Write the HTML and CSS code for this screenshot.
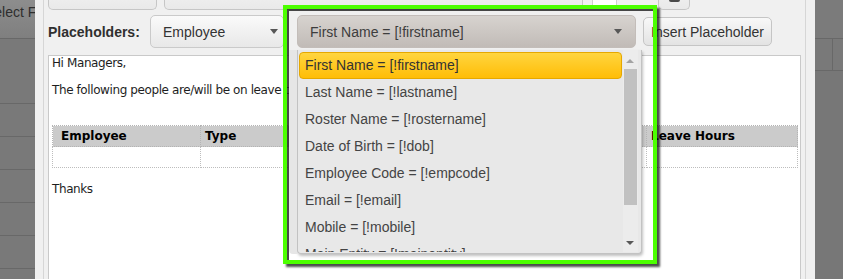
FILE: index.html
```html
<!DOCTYPE html>
<html>
<head>
<meta charset="utf-8">
<link rel="stylesheet" href="styles.css">
</head>
<body>
<div class="screen">
  <aside class="backdrop backdrop-left">
    <div class="bd-cell bd-top"><span class="bd-text">Select F</span></div>
    <div class="bd-cell bd-tall"></div>
    <div class="bd-cell"></div>
    <div class="bd-cell"></div>
    <div class="bd-cell"></div>
    <div class="bd-cell"></div>
    <div class="bd-cell"></div>
    <div class="bd-cell"></div>
  </aside>

  <main class="modal">
    <div class="panel">
      <div class="toolbar">
        <span class="tb-btn tb-1"></span>
        <span class="tb-btn tb-2"></span>
        <span class="tb-box"></span>
        <span class="tb-btn tb-icon"><span class="tb-glyph"></span></span>
      </div>

      <div class="ph-row">
        <label class="ph-label">Placeholders:</label>
        <div class="select sel-type"><span>Employee</span><span class="caret"></span></div>
        <div class="select-wrap">
          <div class="select sel-field"><span>First Name = [!firstname]</span><span class="caret"></span></div>
          <div class="dropdown">
            <ul class="options">
              <li class="active">First Name = [!firstname]</li>
              <li>Last Name = [!lastname]</li>
              <li>Roster Name = [!rostername]</li>
              <li>Date of Birth = [!dob]</li>
              <li>Employee Code = [!empcode]</li>
              <li>Email = [!email]</li>
              <li>Mobile = [!mobile]</li>
              <li>Main Entity = [!mainentity]</li>
            </ul>
            <div class="scrollbar">
              <span class="sb-up"></span>
              <span class="sb-thumb"></span>
              <span class="sb-down"></span>
            </div>
          </div>
        </div>
        <button class="btn">Insert Placeholder</button>
      </div>

      <div class="editor">
        <p>Hi Managers,</p>
        <p>The following people are/will be on leave today:</p>
        <table class="leave-table">
          <colgroup>
            <col class="c1"><col class="c2"><col class="c3"><col class="c4"><col class="c5">
          </colgroup>
          <thead>
            <tr><th class="first">Employee</th><th>Type</th><th>Start Date</th><th>End Date</th><th>Leave Hours</th></tr>
          </thead>
          <tbody>
            <tr><td></td><td></td><td></td><td></td><td></td></tr>
          </tbody>
        </table>
        <p>Thanks</p>
      </div>
    </div>
  </main>

  <aside class="backdrop backdrop-right">
    <div class="bd-cell bd-top-r"></div>
    <div class="bd-cell bd-split"><span class="bd-half"></span><span class="bd-half"></span></div>
    <div class="bd-cell bd-rest"></div>
  </aside>
</div>
<div class="highlight"></div>
</body>
</html>
```

FILE: styles.css
```css
* { box-sizing: border-box; }

html, body {
  margin: 0;
  padding: 0;
  width: 843px;
  height: 279px;
  overflow: hidden;
  background: #7a7a7a;
  font-family: "Liberation Sans", Arial, sans-serif;
}

.screen {
  display: flex;
  width: 843px;
  height: 279px;
  overflow: hidden;
}

/* ---------- dimmed backdrop ---------- */
.backdrop {
  display: flex;
  flex-direction: column;
  background: #797979;
  overflow: hidden;
}
.backdrop-left { width: 35px; flex: none; }
.backdrop-right { width: 28px; flex: none; }

.bd-cell {
  height: 33px;
  flex: none;
  border-bottom: 1px solid #686868;
}
.bd-top {
  height: 39px;
  background: linear-gradient(#8d8d8d, #7f7f7f);
  padding-top: 3px;
  white-space: nowrap;
  overflow: hidden;
}
.bd-text {
  display: inline-block;
  margin-left: -15px;
  font-size: 14px;
  line-height: 16px;
  color: #2e2e2e;
}
.bd-tall { height: 65px; }

.bd-top-r { height: 39px; background: #7b7b7b; }
.bd-split { height: 32px; display: flex; }
.bd-half { width: 18px; border-right: 1px solid #686868; }
.bd-half + .bd-half { border-right: none; flex: 1; }
.bd-rest { border-bottom: none; flex: 1; background: #777; }

/* ---------- modal ---------- */
.modal {
  width: 780px;
  flex: none;
  background: #f0f0f0;
  padding: 0 9px 0 8px;
}

.panel {
  margin-top: -25px;
  border: 1px solid #d6d6d6;
  padding: 0 4px;
  height: 330px;
}

.toolbar {
  display: flex;
  align-items: flex-end;
  height: 34px;
}
.tb-btn {
  height: 30px;
  border: 1px solid #c6c6c6;
  border-top: none;
  border-radius: 0 0 5px 5px;
  background: linear-gradient(#f6f6f6, #e9e9e9);
  flex: none;
}
.tb-1 { width: 109px; }
.tb-2 { width: 419px; margin-left: 7px; }
.tb-box {
  width: 25px;
  height: 30px;
  margin-left: 9px;
  margin-bottom: 2px;
  background: #fff;
  border-left: 1px solid #cfcfcf;
  border-right: 1px solid #cfcfcf;
  flex: none;
}
.tb-icon {
  width: 32px;
  margin-left: 41px;
  display: flex;
  justify-content: center;
}
.tb-glyph {
  width: 11px;
  height: 22px;
  border-radius: 0 0 2px 2px;
  background: #4a4a4a;
}

/* ---------- placeholder row ---------- */
.ph-row {
  display: flex;
  align-items: center;
  height: 33px;
  margin-top: 5px;
}
.ph-label {
  width: 102px;
  flex: none;
  font-weight: bold;
  font-size: 14px;
  color: #2f2f2f;
}

.select {
  display: flex;
  align-items: center;
  justify-content: space-between;
  height: 33px;
  border: 1px solid #cacaca;
  border-radius: 5px;
  font-size: 14px;
  color: #333;
  white-space: nowrap;
}
.sel-type {
  width: 134px;
  flex: none;
  padding: 0 5px 0 12px;
  background: linear-gradient(#fafafa, #e8e8e8);
}
.select-wrap {
  position: relative;
  width: 339px;
  flex: none;
  margin-left: 13px;
}
.sel-field {
  width: 339px;
  padding: 0 13px 0 12px;
  background: linear-gradient(#d7d3cf, #c1bbb7);
  border-color: #c3bdb9;
  color: #3d3d3d;
}
.caret {
  width: 0;
  height: 0;
  border-left: 4px solid transparent;
  border-right: 4px solid transparent;
  border-top: 5px solid #575757;
}

.dropdown {
  position: absolute;
  top: 35px;
  left: 0;
  width: 345px;
  height: 204px;
  background: #e8e8e8;
  border: 1px solid #c2c2c2;
  border-top: none;
  border-radius: 0 0 4px 4px;
  box-shadow: -8px 0 0 #e6e6e6, 1px 2px 3px rgba(0, 0, 0, 0.25);
  z-index: 5;
}
.options {
  list-style: none;
  margin: 0;
  padding: 2px 19px 0 1px;
  height: 202px;
  overflow: hidden;
}
.options li {
  height: 27px;
  line-height: 25px;
  border: 1px solid transparent;
  border-radius: 4px;
  padding-left: 5px;
  font-size: 14px;
  color: #444;
  white-space: nowrap;
}
.options li.active {
  background: linear-gradient(#ffd53f, #ffbd07);
  border-color: #e6a800;
  color: #333;
}

.scrollbar {
  position: absolute;
  top: 0;
  right: 3px;
  width: 15px;
  height: 202px;
  background: #ececec;
}
.sb-up, .sb-down {
  position: absolute;
  left: 3px;
  width: 0;
  height: 0;
  border-left: 4px solid transparent;
  border-right: 4px solid transparent;
}
.sb-up { top: 9px; border-bottom: 4px solid #a3a3a3; }
.sb-down { top: 191px; border-top: 4px solid #585858; }
.sb-thumb {
  position: absolute;
  left: 1px;
  top: 19px;
  width: 13px;
  height: 136px;
  background: #c1c1c1;
}

.btn {
  width: 129px;
  height: 29px;
  flex: none;
  margin-left: 7px;
  padding: 0;
  border: 1px solid #c5c5c5;
  border-radius: 5px;
  background: linear-gradient(#f8f8f8, #e3e3e3);
  font-family: "Liberation Sans", Arial, sans-serif;
  font-size: 14px;
  color: #333;
}

/* ---------- editor ---------- */
.editor {
  margin-top: 7px;
  height: 260px;
  background: #fff;
  border: 1px solid #c9c9c9;
  padding: 0 3px;
  font-family: "DejaVu Sans", Verdana, sans-serif;
  font-size: 12px;
  line-height: 15px;
  color: #1e1e1e;
}
.editor p { margin: 0 0 12px; letter-spacing: -0.4px; }
.editor p:last-child { margin-top: 14px; }

.leave-table {
  width: 745px;
  table-layout: fixed;
  border-collapse: collapse;
  margin: 27px 0 12px;
}
.c1 { width: 148px; }
.c2 { width: 149px; }
.c3 { width: 149px; }
.c4 { width: 148px; }
.c5 { width: 151px; }

.leave-table th {
  height: 21px;
  padding: 0 4px;
  background: #cbcbcb;
  border: 1px dotted #b4b4b4;
  text-align: left;
  font-weight: bold;
  color: #000;
}
.leave-table th.first { padding-left: 8px; }
.leave-table td {
  height: 21px;
  padding: 0;
  border: 1px dotted #bdbdbd;
}

/* ---------- annotation highlight ---------- */
.highlight {
  position: absolute;
  left: 283px;
  top: 5px;
  width: 374px;
  height: 259px;
  border: 4px solid #4cff00;
  box-shadow: 3px 3px 2px rgba(0, 0, 0, 0.7), inset 2px 2px 0 rgba(40, 40, 40, 0.85);
  z-index: 10;
}
```
